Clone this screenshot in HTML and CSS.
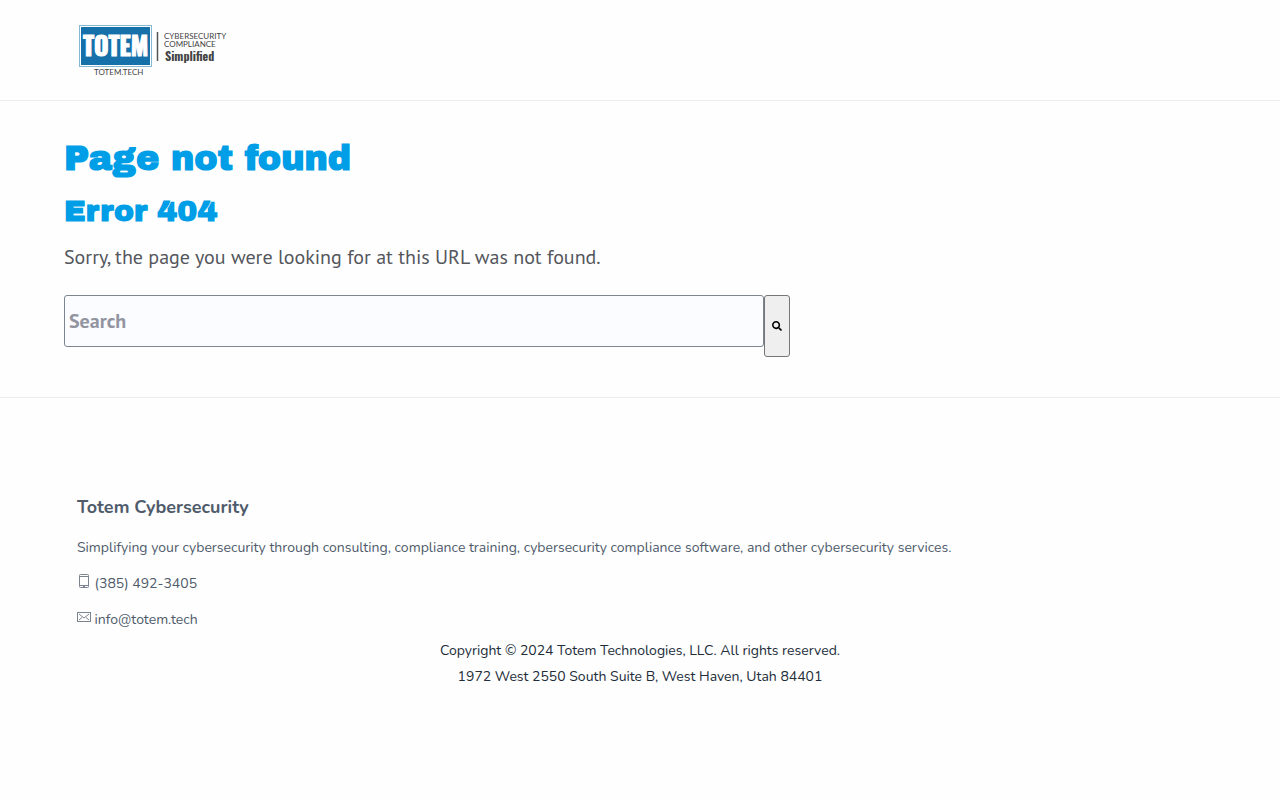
FILE: index.html
```html
<!DOCTYPE html>
<html lang="en">
<head>
  <meta charset="UTF-8" />
  <meta name="viewport" content="width=device-width, initial-scale=1.0" />
  <title>Page not found</title>
  <link rel="stylesheet" href="styles.css">
</head>
<body>
  <header class="site-header">
    <a class="logo" href="/" aria-label="Totem Technologies">
      <svg width="150" height="54" viewBox="0 0 150 54">
        <rect x="1.500" y="2.500" width="72" height="41" fill="#fff" stroke="#86b8d3" />
        <rect x="3" y="4" width="69" height="38" fill="#1670a9" />
        <text class="logo-name" x="5" y="33">TOTEM</text>
        <text class="logo-small" x="16" y="52">TOTEM.TECH</text>
        <path d="M79.500 9v29" stroke="#555" stroke-width="1.500" />
        <text class="logo-small" x="86" y="16">CYBERSECURITY</text>
        <text class="logo-small" x="86" y="24">COMPLIANCE</text>
        <text class="logo-tag" x="87" y="38">Simplified</text>
      </svg>
    </a>
  </header>

  <main class="content">
    <h1>Page not found</h1>
    <h2>Error 404</h2>
    <p>Sorry, the page you were looking for at this URL was not found.</p>
    <form class="search" action="/hs-search-results">
      <input type="search" name="term" placeholder="Search" aria-label="Search" />
      <button type="submit" aria-label="Search">
        <svg width="10" height="10" viewBox="0 0 512 512"><path d="M505 442.700L405.300 343c-4.500-4.500-10.600-7-17-7H372c27.600-35.300 44-79.700 44-128C416 93.100 322.900 0 208 0S0 93.100 0 208s93.100 208 208 208c48.300 0 92.700-16.400 128-44v16.300c0 6.400 2.500 12.500 7 17l99.700 99.700c9.400 9.400 24.600 9.400 33.900 0l28.300-28.300c9.400-9.400 9.400-24.600.1-34zM208 336c-70.700 0-128-57.200-128-128 0-70.700 57.200-128 128-128 70.700 0 128 57.200 128 128 0 70.700-57.200 128-128 128z" /></svg>
      </button>
    </form>
  </main>

  <footer class="site-footer">
    <h3>Totem Cybersecurity</h3>
    <p>Simplifying your cybersecurity through consulting, compliance training, cybersecurity compliance software, and other cybersecurity services.</p>
    <p>
      <a href="tel:3854923405">
        <svg width="14" height="14" viewBox="0 0 14 14"><rect x="2.500" y=".5" width="9" height="13" rx="1" /><path d="M2.500 2.500h9M2.500 11.500h9M6 12.500h2" /></svg>
        (385) 492-3405</a>
    </p>
    <p>
      <a href="mailto:info@totem.tech">
        <svg width="14" height="14" viewBox="0 0 14 14"><rect x=".5" y="2.500" width="13" height="9" /><path d="M2 4l5 4 5-4M2 10l3-2.500M12 10l-3-2.500" /></svg>
        info@totem.tech</a>
    </p>
    <div class="legal">
      <div>Copyright © 2024 Totem Technologies, LLC. All rights reserved.</div>
      <div>1972 West 2550 South Suite B, West Haven, Utah 84401</div>
    </div>
  </footer>
</body>
</html>
```

FILE: styles.css
```css
* {
  box-sizing: border-box;
}

body {
  margin: 0;
  background: #fefefe;
  color: #54565c;
  font-family: "PT Sans", "Noto Sans", sans-serif;
  font-size: 20px;
}

.site-header {
  padding: 23px 78px;
  border-bottom: 1px solid #ededed;
}

.logo,
.logo svg {
  display: block;
}

.logo {
  width: 150px;
}

.logo-name {
  font: 700 25px "Oswald", "Liberation Sans Narrow", sans-serif;
  fill: #fff;
  stroke: #fff;
}

.logo-small {
  font: 400 8px "Lato", sans-serif;
  fill: #444;
}

.logo-tag {
  font: 700 12px "Oswald", "Liberation Sans Narrow", sans-serif;
  fill: #444;
}

.content {
  padding: 33px 64px 40px;
  border-bottom: 1px solid #ededed;
}

h1,
h2 {
  margin: 0;
  color: #009ee6;
  font-family: "Archivo Black", "Inter", sans-serif;
  font-weight: 700;
}

h1 {
  font-size: 35px;
  line-height: 48px;
}

h2 {
  margin-top: 9px;
  font-size: 30px;
  line-height: 40px;
}

.content p {
  margin: 9px 0 21px;
  line-height: 34px;
}

.search {
  display: flex;
  align-items: flex-start;
}

.search input {
  flex: 0 1 700px;
  min-width: 0;
  height: 52px;
  padding: 0 4px;
  border: 1px solid #7d8590;
  border-radius: 3px;
  background: #fbfcff;
  font: 600 20px "PT Sans", "Noto Sans", sans-serif;
}

.search input::placeholder {
  color: #92959f;
}

.search button {
  width: 26px;
  height: 62px;
  padding: 0;
  border: 1px solid #767676;
  border-radius: 3px;
  background: #efefef;
}

.site-footer {
  padding: 94px 77px;
  color: #4f5b6b;
  font-family: "Nunito", "Lato", sans-serif;
  font-size: 14px;
  line-height: 24px;
}

h3 {
  margin: 0 0 14px;
  font-size: 18px;
  line-height: 30px;
}

.site-footer p {
  margin: 0 0 12px;
}

.site-footer a {
  color: inherit;
  text-decoration: none;
}

.site-footer svg {
  fill: none;
  stroke: #7c8490;
}

.site-footer p:last-of-type {
  margin-bottom: 6px;
}

.legal {
  color: #222d3a;
  line-height: 26px;
  text-align: center;
}
```
